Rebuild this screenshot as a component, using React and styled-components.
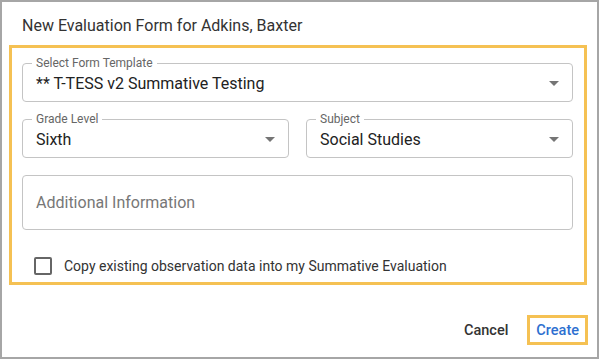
import React from "react";
import styled, { createGlobalStyle } from "styled-components";

const GlobalStyle = createGlobalStyle`
    html, body {
        margin: 0;
        padding: 0;
        background: #ffffff;
    }
    * {
        box-sizing: border-box;
    }
`;

const Dialog = styled.div`
    width: 599px;
    height: 359px;
    border: 2px solid #a6a6a6;
    background: #ffffff;
    display: flex;
    flex-direction: column;
    font-family: Roboto, "Liberation Sans", sans-serif;
`;

const Title = styled.h2`
    margin: 0;
    padding: 12px 20px 0 20px;
    font-size: 16px;
    line-height: 24px;
    font-weight: 400;
    color: #333333;
`;

const FormBox = styled.div`
    margin: 7px 10px 0 7px;
    border: 3px solid #f5c153;
    padding: 15px 11px 7px 10px;
    display: flex;
    flex-direction: column;
    gap: 17px;
`;

const Row = styled.div`
    display: grid;
    grid-template-columns: ${(p) => (p.$cols === 2 ? "1fr 1fr" : "1fr")};
    gap: 17px;
`;

const Field = styled.div`
    position: relative;
    height: ${(p) => (p.$tall ? "55px" : "39px")};
    border: 1px solid #c4c4c4;
    border-radius: 4px;
    display: flex;
    align-items: center;
    padding: 0 14px 0 13px;
`;

const FieldLabel = styled.span`
    position: absolute;
    top: -8px;
    left: 9px;
    padding: 0 4px;
    background: #ffffff;
    font-size: 12px;
    line-height: 14px;
    color: #666666;
`;

const Value = styled.span`
    flex: 1;
    font-size: 16px;
    color: #222222;
    padding-top: 1px;
`;

const Placeholder = styled.span`
    flex: 1;
    font-size: 16px;
    color: #777777;
`;

const Arrow = styled.svg`
    width: 24px;
    height: 24px;
    margin-right: -8px;
    fill: #757575;
`;

const CheckRow = styled.label`
    display: flex;
    align-items: center;
    gap: 12px;
    padding-left: 12px;
    margin-top: 10px;
    font-size: 14px;
    color: #333333;
`;

const CheckBox = styled.span`
    width: 18px;
    height: 18px;
    border: 2px solid #666666;
    border-radius: 2px;
`;

const Footer = styled.div`
    display: flex;
    justify-content: flex-end;
    align-items: center;
    margin-top: 30px;
    padding-right: 9px;
    gap: 11px;
`;

const Button = styled.button`
    font-family: Roboto, "Liberation Sans", sans-serif;
    font-size: 14.5px;
    font-weight: 500;
    background: transparent;
    cursor: pointer;
    height: 30px;
    padding: 0 ${(p) => (p.$highlight ? "6px" : "8px")};
    border: ${(p) => (p.$highlight ? "3px solid #f5c153" : "none")};
    color: ${(p) => (p.$primary ? "#2d6fd0" : "#333333")};
`;

function SelectField({ label, value }) {
    return (
        <Field>
            <FieldLabel>{label}</FieldLabel>
            <Value>{value}</Value>
            <Arrow viewBox="0 0 24 24">
                <path d="M7 10l5 5 5-5z" />
            </Arrow>
        </Field>
    );
}

export default function App() {
    return (
        <>
            <GlobalStyle />
            <Dialog>
                <Title>New Evaluation Form for Adkins, Baxter</Title>
                <FormBox>
                    <Row>
                        <SelectField label="Select Form Template" value="** T-TESS v2 Summative Testing" />
                    </Row>
                    <Row $cols={2}>
                        <SelectField label="Grade Level" value="Sixth" />
                        <SelectField label="Subject" value="Social Studies" />
                    </Row>
                    <Row>
                        <Field $tall>
                            <Placeholder>Additional Information</Placeholder>
                        </Field>
                    </Row>
                    <CheckRow>
                        <CheckBox />
                        Copy existing observation data into my Summative Evaluation
                    </CheckRow>
                </FormBox>
                <Footer>
                    <Button>Cancel</Button>
                    <Button $primary $highlight>Create</Button>
                </Footer>
            </Dialog>
        </>
    );
}
